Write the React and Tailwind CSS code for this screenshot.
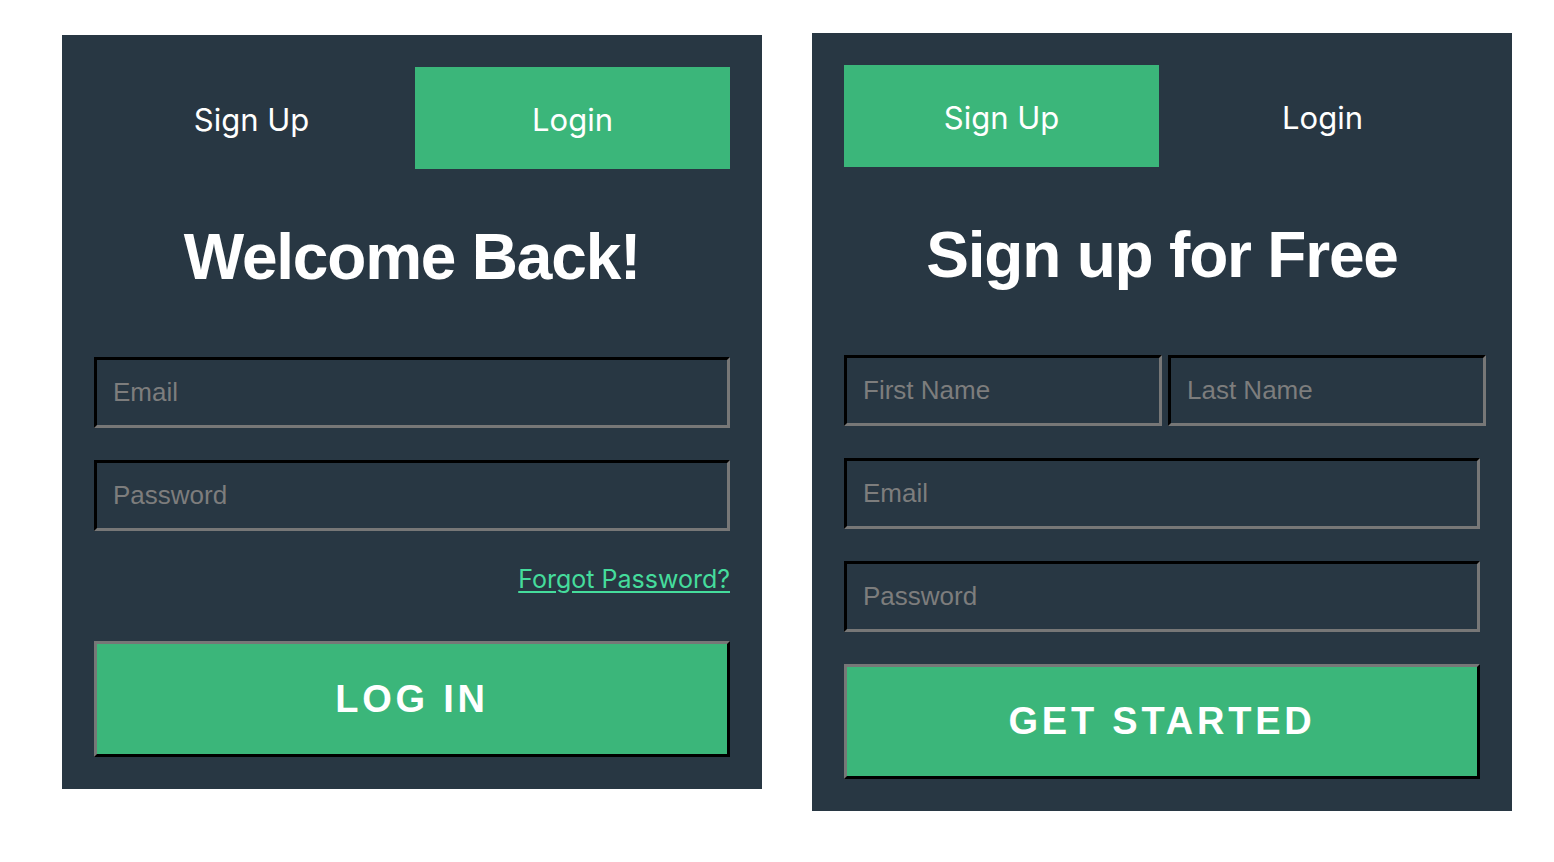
const inputCls =
  'block h-[71px] bg-transparent border-[3px] border-t-black border-l-black border-b-[#777] border-r-[#777] px-[16px] text-[26px] text-white placeholder:text-[#7d7d7d] outline-none font-["Liberation_Sans",Arial,sans-serif]'

const btnCls =
  'block w-full border-[3px] border-t-[#777] border-l-[#777] border-b-black border-r-black bg-[#3bb67a] text-white font-bold text-[38px] tracking-[0.1em] uppercase font-["Liberation_Sans",Arial,sans-serif]'

function Tabs({ active }) {
  const tab = (label, on) => (
    <div
      className={`flex h-[102px] w-[315px] items-center justify-center pt-[4px] text-[31px] text-white ${on ? 'bg-[#3bb67a]' : ''}`}
    >
      {label}
    </div>
  )
  return (
    <div className="flex gap-[6px] font-['Inter',sans-serif]">
      {tab('Sign Up', active === 'signup')}
      {tab('Login', active === 'login')}
    </div>
  )
}

function Heading({ children }) {
  return (
    <h1 className="mt-[51px] mb-[63px] text-center text-[64px] leading-[74px] font-bold tracking-[-1.2px] text-white font-['Liberation_Sans',Arial,sans-serif]">
      {children}
    </h1>
  )
}

function LoginPanel() {
  return (
    <div className="w-[700px] bg-[#283743] p-[32px] mt-[35px]">
      <Tabs active="login" />
      <Heading>Welcome Back!</Heading>
      <div className="flex flex-col gap-[32px]">
        <input className={`${inputCls} w-[636px]`} placeholder="Email" />
        <input className={`${inputCls} w-[636px]`} placeholder="Password" type="password" />
      </div>
      <div className="flex justify-end mt-[30px] mb-[44px]">
        <a href="#" className="text-[25px] leading-[36px] text-[#45dc9c] underline underline-offset-[3px] font-['Inter',sans-serif]">
          Forgot Password?
        </a>
      </div>
      <button className={`${btnCls} h-[116px]`}>Log In</button>
    </div>
  )
}

function SignupPanel() {
  return (
    <div className="w-[700px] bg-[#283743] p-[32px] mt-[33px]">
      <Tabs active="signup" />
      <Heading>Sign up for Free</Heading>
      <div className="flex flex-col gap-[32px]">
        <div className="flex gap-[6px] w-[642px]">
          <input className={`${inputCls} w-[318px]`} placeholder="First Name" />
          <input className={`${inputCls} w-[318px]`} placeholder="Last Name" />
        </div>
        <input className={`${inputCls} w-[636px]`} placeholder="Email" />
        <input className={`${inputCls} w-[636px]`} placeholder="Password" type="password" />
        <button className={`${btnCls} h-[115px]`}>Get Started</button>
      </div>
    </div>
  )
}

export default function App() {
  return (
    <div className="min-h-[862px] w-[1554px] bg-white flex items-start gap-[50px] pl-[62px]">
      <LoginPanel />
      <SignupPanel />
    </div>
  )
}
